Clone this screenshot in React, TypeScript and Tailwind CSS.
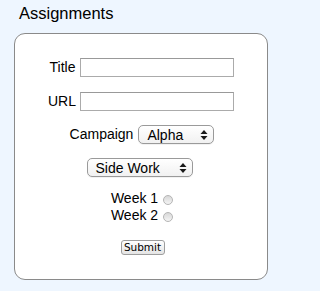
import React from 'react';

const font = { fontFamily: '"Liberation Sans", Arial, sans-serif' };

const SelectArrows: React.FC = () => (
  <svg width="8" height="12" viewBox="0 0 8 12" className="absolute right-[5px] top-1/2 -translate-y-1/2">
    <path d="M4 1 L7.5 5 L0.5 5 Z" fill="#1a1a1a" />
    <path d="M4 11 L7.5 7 L0.5 7 Z" fill="#1a1a1a" />
  </svg>
);

const FakeSelect: React.FC<{ value: string; width: string }> = ({ value, width }) => (
  <div
    className={`relative ${width} h-[19px] rounded-[5px] border border-[#9a9a9a] bg-gradient-to-b from-white to-[#f1f1f1] flex items-center pl-[8px] text-[14px] text-black leading-none shadow-[0_1px_0_rgba(0,0,0,0.05)]`}
  >
    <span>{value}</span>
    <SelectArrows />
  </div>
);

const Radio: React.FC = () => (
  <span className="inline-block w-[10px] h-[10px] rounded-full border border-[#b5b5b5] bg-gradient-to-b from-[#d8d8d8] to-[#f4f4f4]" />
);

const App: React.FC = () => {
  return (
    <div className="w-full min-h-screen bg-[#eef6ff]" style={font}>
      <div className="w-[285px] h-[291px] relative overflow-hidden">
        <h2 className="pl-[19px] pt-[3px] text-[16.5px] leading-[20px] text-black font-normal">Assignments</h2>

        <div className="ml-[14px] mt-[10px] w-[254px] h-[247px] bg-white border border-[#8a8a8a] rounded-[11px] flex flex-col items-center text-[14px] text-black">
          {/* Title */}
          <div className="mt-[24px] h-[19px] flex items-center gap-[5px] pl-[2px]">
            <span>Title</span>
            <input type="text" className="w-[154px] h-[19px] border border-[#ababab] border-t-[#999] bg-white outline-none" />
          </div>

          {/* URL */}
          <div className="mt-[15px] h-[19px] flex items-center gap-[4px]">
            <span>URL</span>
            <input type="text" className="w-[154px] h-[19px] border border-[#ababab] border-t-[#999] bg-white outline-none" />
          </div>

          {/* Campaign */}
          <div className="mt-[14px] h-[19px] flex items-center gap-[5px] pl-[2px]">
            <span>Campaign</span>
            <FakeSelect value="Alpha" width="w-[76px]" />
          </div>

          {/* Type */}
          <div className="mt-[14px] h-[19px] flex items-center pr-[3px]">
            <FakeSelect value="Side Work" width="w-[106px]" />
          </div>

          {/* Weeks */}
          <div className="mt-[13px] flex flex-col items-center leading-[17px] pl-[2px]">
            <label className="flex items-center gap-[5px]">
              <span>Week 1</span>
              <span className="mt-[3px] flex"><Radio /></span>
            </label>
            <label className="flex items-center gap-[5px]">
              <span>Week 2</span>
              <span className="mt-[3px] flex"><Radio /></span>
            </label>
          </div>

          {/* Submit */}
          <button
            type="button"
            className="mt-[16px] ml-[3px] w-[44px] h-[15px] rounded-[3px] border border-[#9d9d9d] bg-gradient-to-b from-white to-[#e4e4e4] text-[10.5px] leading-none text-black flex items-center justify-center"
            style={{ fontFamily: '"DejaVu Sans", Verdana, sans-serif' }}
          >
            Submit
          </button>
        </div>
      </div>
    </div>
  );
};

export default App;
